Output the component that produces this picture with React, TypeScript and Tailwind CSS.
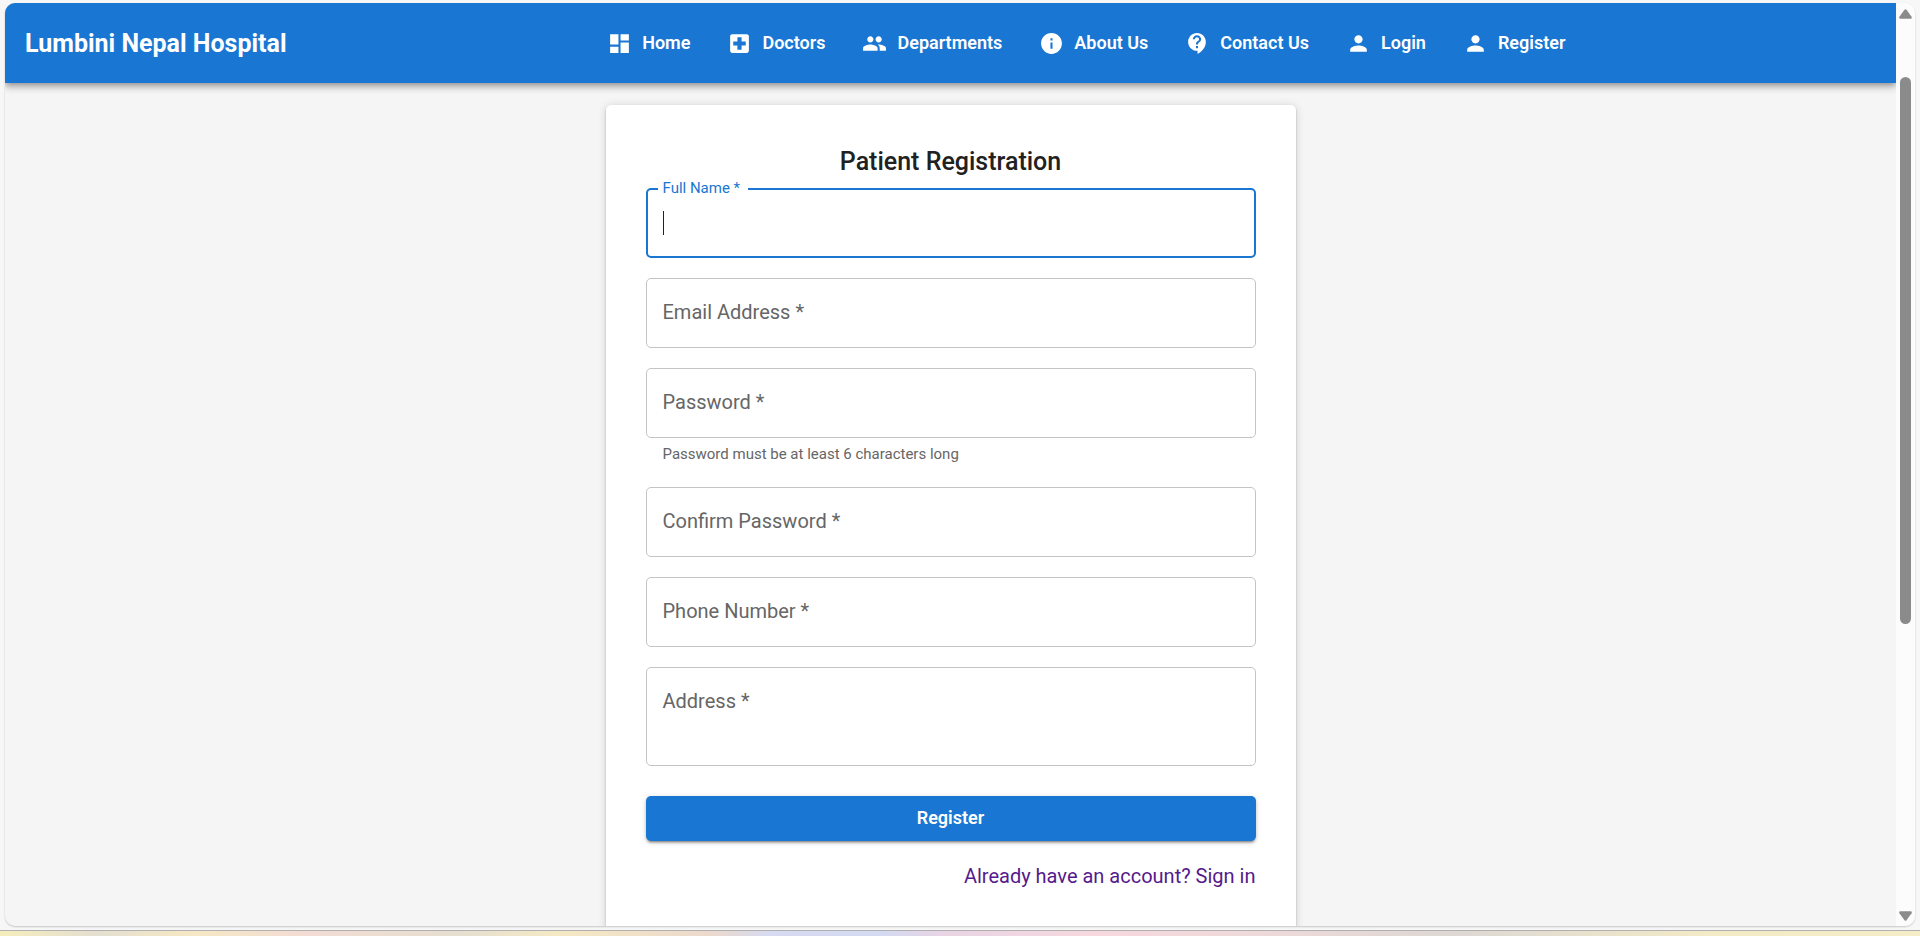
import React from "react";
import {
  MdDashboard,
  MdLocalHospital,
  MdPeople,
  MdInfo,
  MdContactSupport,
  MdPerson,
} from "react-icons/md";
import type { IconType } from "react-icons";

const navItems: { label: string; icon: IconType }[] = [
  { label: "Home", icon: MdDashboard },
  { label: "Doctors", icon: MdLocalHospital },
  { label: "Departments", icon: MdPeople },
  { label: "About Us", icon: MdInfo },
  { label: "Contact Us", icon: MdContactSupport },
  { label: "Login", icon: MdPerson },
  { label: "Register", icon: MdPerson },
];

function Header() {
  return (
    <header className="relative z-10 flex h-20 shrink-0 items-center bg-[#1976d2] px-5 text-white shadow-[0_2px_5px_-1px_rgba(0,0,0,0.25),0_5px_6px_rgba(0,0,0,0.16),0_1px_12px_rgba(0,0,0,0.12)]">
      <h1 className="pt-px text-[25px] leading-10 font-bold whitespace-nowrap">
        Lumbini Nepal Hospital
      </h1>
      <nav className="flex flex-1 items-center justify-center gap-[37px] pl-[10px]">
        {navItems.map(({ label, icon: Icon }) => (
          <a
            key={label}
            href="#"
            className="flex items-center gap-[10px] text-[18px] leading-8 font-semibold whitespace-nowrap"
          >
            <Icon size={25} aria-hidden="true" />
            {label}
          </a>
        ))}
      </nav>
    </header>
  );
}

interface FieldProps {
  id: string;
  label: string;
  type?: string;
  helper?: string;
}

function Field({ id, label, type = "text", helper }: FieldProps) {
  return (
    <div>
      <div className="relative">
        <input
          id={id}
          type={type}
          className="block h-[70px] w-full rounded-[5px] border border-[#c4c4c4] bg-white px-4 text-xl outline-none"
        />
        <label
          htmlFor={id}
          className="absolute top-5 left-[17px] text-xl leading-[29px] text-[#666666]"
        >
          {label} *
        </label>
      </div>
      {helper && (
        <p className="mx-[17px] mt-1 text-[15px] leading-[25px] text-[#666666]">{helper}</p>
      )}
    </div>
  );
}

function RegistrationCard() {
  return (
    <section className="w-[690px] shrink-0 rounded-[5px] bg-white p-10 shadow-[0_2px_3px_-1px_rgba(0,0,0,0.2),0_1px_2px_rgba(0,0,0,0.14),0_1px_8px_rgba(0,0,0,0.16)]">
      <h2 className="pb-[10px] text-center text-[25px] leading-[33px] font-medium text-[#212121]">
        Patient Registration
      </h2>
      <form className="flex flex-col gap-5" onSubmit={(e) => e.preventDefault()}>
        <div className="relative">
          <input
            id="name"
            type="text"
            className="block h-[70px] w-full rounded-[5px] border-2 border-[#1976d2] bg-white px-4 text-xl caret-transparent outline-none"
          />
          <label
            htmlFor="name"
            className="absolute -top-[11px] left-3 bg-white pr-2 pl-[5px] text-[15px] leading-[22px] text-[#1976d2]"
          >
            Full Name *
          </label>
          <span
            aria-hidden="true"
            className="absolute top-[23px] left-[17px] h-6 w-px bg-[#212121]"
          />
        </div>
        <Field id="email" label="Email Address" type="email" />
        <Field
          id="password"
          label="Password"
          type="password"
          helper="Password must be at least 6 characters long"
        />
        <Field id="confirm" label="Confirm Password" type="password" />
        <Field id="phone" label="Phone Number" type="tel" />
        <div className="relative">
          <textarea
            id="address"
            className="block h-[99px] w-full resize-none rounded-[5px] border border-[#c4c4c4] bg-white px-4 py-5 text-xl outline-none"
          />
          <label
            htmlFor="address"
            className="absolute top-5 left-[17px] text-xl leading-[29px] text-[#666666]"
          >
            Address *
          </label>
        </div>
        <button
          type="submit"
          className="mt-[10px] h-[45px] rounded-[5px] bg-[#1976d2] pb-[2px] text-[18px] font-semibold text-white shadow-[0_3px_2px_-2px_rgba(0,0,0,0.3),0_2px_3px_rgba(0,0,0,0.2),0_1px_6px_rgba(0,0,0,0.12)]"
        >
          Register
        </button>
        <a href="#" className="self-end text-xl leading-[30px] text-[#551a8b]">
          Already have an account? Sign in
        </a>
      </form>
    </section>
  );
}

function ScrollTrack() {
  return (
    <div
      aria-hidden="true"
      className="flex w-[19px] shrink-0 flex-col items-center bg-[#fcfcfc] pt-[6px] pb-[5px]"
    >
      <svg width="13" height="10" viewBox="0 0 13 10" fill="#8b8b8b">
        <path d="M5.5.8Q6.5-.4 7.5.8L12.6 7.8Q13.2 9.6 11.6 9.8H1.4Q-.2 9.6.4 7.8Z" />
      </svg>
      <div className="flex w-[11px] flex-1 flex-col pt-[58px] pb-[287px]">
        <div className="flex-1 rounded-full bg-[#8b8b8b]" />
      </div>
      <svg width="13" height="10" viewBox="0 0 13 10" fill="#8b8b8b">
        <path d="M5.5 9.2Q6.5 10.4 7.5 9.2L12.6 2.2Q13.2.4 11.6.2H1.4Q-.2.4.4 2.2Z" />
      </svg>
    </div>
  );
}

export default function App() {
  return (
    <div className="flex h-screen flex-col overflow-hidden bg-[#f7f7f7] font-[Roboto,sans-serif]">
      <div className="flex min-h-0 flex-1 px-[5px] pt-[3px] pb-1">
        <div className="flex min-w-0 flex-1 overflow-hidden rounded-[10px] bg-[#f5f5f5] shadow-[0_1px_2px_rgba(0,0,0,0.2)]">
          <div className="flex min-w-0 flex-1 flex-col overflow-hidden">
            <Header />
            <main className="flex min-h-0 flex-1 items-start justify-center pt-[22px]">
              <RegistrationCard />
            </main>
          </div>
          <ScrollTrack />
        </div>
      </div>
      <div className="h-[6px] shrink-0 border-t border-[#b0b0b0] bg-[linear-gradient(90deg,#f6edbc_0%,#e4dfd0_5%,#f6e8c4_10%,#f3dcd4_16%,#e6dfd0_24%,#f5e9c4_29%,#ecd9cc_37%,#d7daf0_40%,#d3daf2_46%,#e8d4e4_49%,#f7d8de_57%,#efd9da_65%,#ddd8d4_76%,#f3eac6_89%,#f5edc8_100%)]" />
    </div>
  );
}
